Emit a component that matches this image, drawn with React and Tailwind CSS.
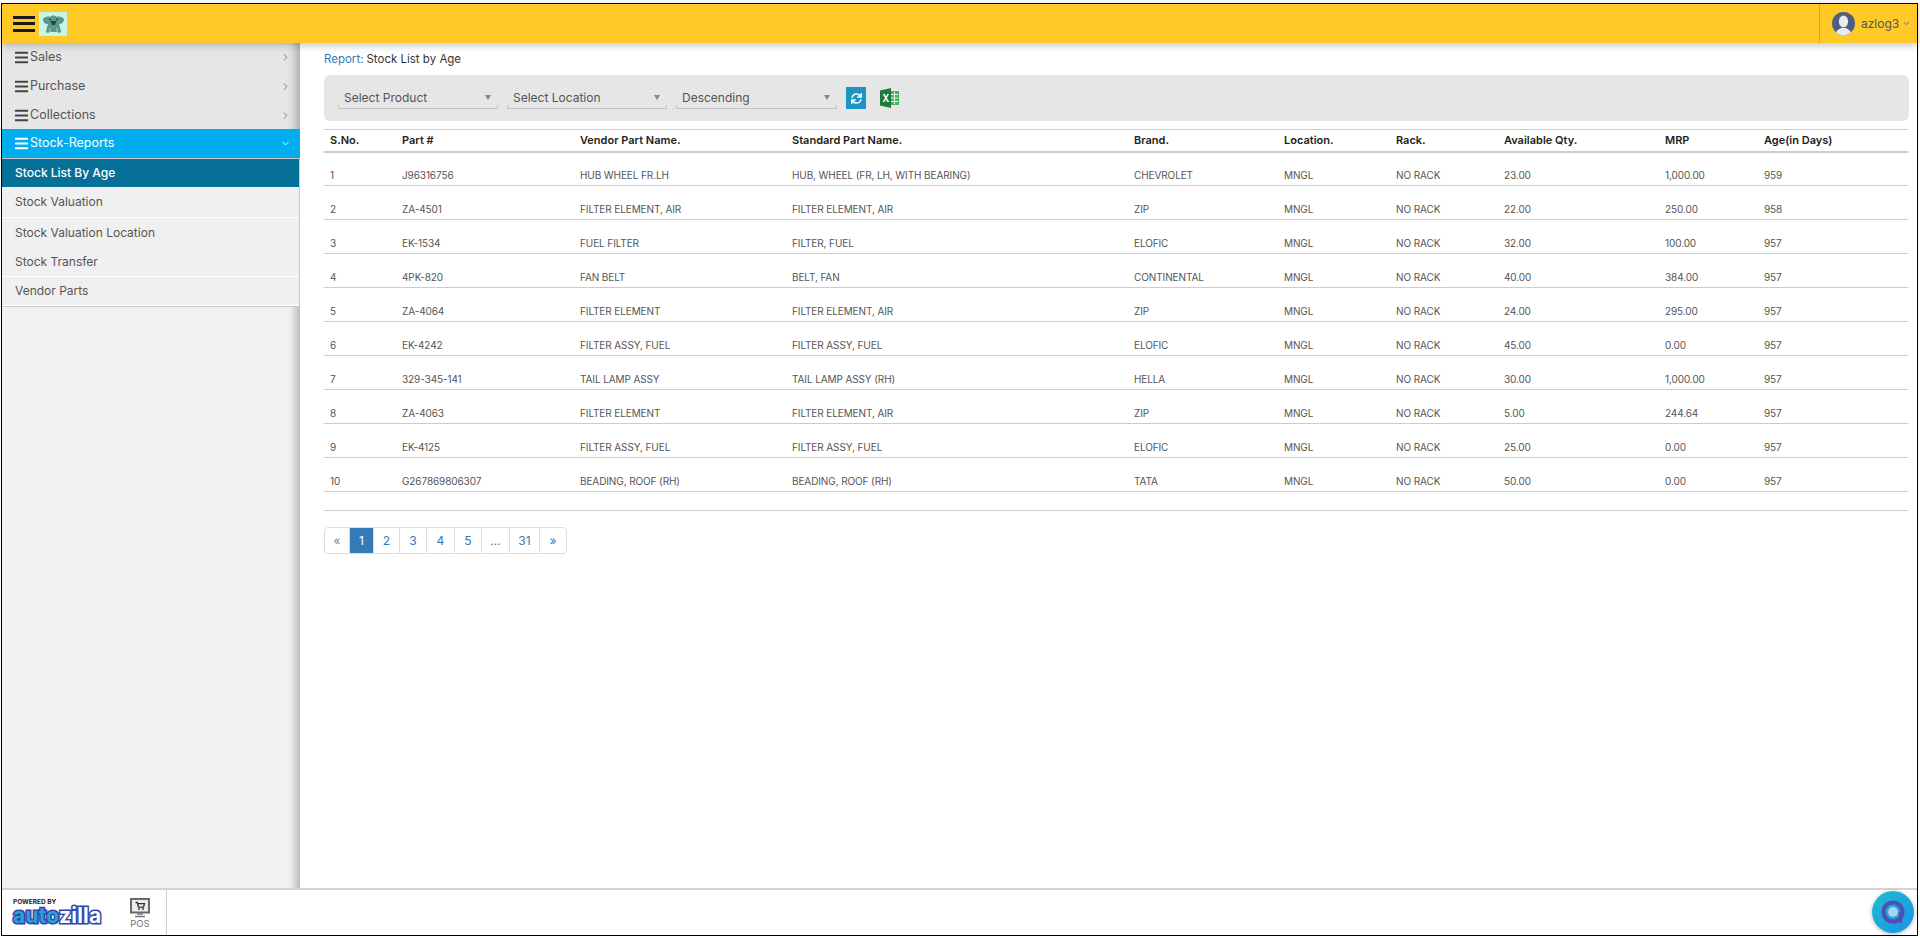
import React from "react";
import { FaBars, FaSync } from "react-icons/fa";
import { LuChevronRight, LuChevronDown } from "react-icons/lu";

const rows = [
  ["1","J96316756","HUB WHEEL FR.LH","HUB, WHEEL (FR, LH, WITH BEARING)","CHEVROLET","23.00","1,000.00","959"],
  ["2","ZA-4501","FILTER ELEMENT, AIR","FILTER ELEMENT, AIR","ZIP","22.00","250.00","958"],
  ["3","EK-1534","FUEL FILTER","FILTER, FUEL","ELOFIC","32.00","100.00","957"],
  ["4","4PK-820","FAN BELT","BELT, FAN","CONTINENTAL","40.00","384.00","957"],
  ["5","ZA-4064","FILTER ELEMENT","FILTER ELEMENT, AIR","ZIP","24.00","295.00","957"],
  ["6","EK-4242","FILTER ASSY, FUEL","FILTER ASSY, FUEL","ELOFIC","45.00","0.00","957"],
  ["7","329-345-141","TAIL LAMP ASSY","TAIL LAMP ASSY (RH)","HELLA","30.00","1,000.00","957"],
  ["8","ZA-4063","FILTER ELEMENT","FILTER ELEMENT, AIR","ZIP","5.00","244.64","957"],
  ["9","EK-4125","FILTER ASSY, FUEL","FILTER ASSY, FUEL","ELOFIC","25.00","0.00","957"],
  ["10","G267869806307","BEADING, ROOF (RH)","BEADING, ROOF (RH)","TATA","50.00","0.00","957"],
];
const heads = ["S.No.","Part #","Vendor Part Name.","Standard Part Name.","Brand.","Location.","Rack.","Available Qty.","MRP","Age(in Days)"];
const widths = ["w-[72px]","w-[178px]","w-[212px]","w-[342px]","w-[150px]","w-[112px]","w-[108px]","w-[161px]","w-[99px]","w-[150px]"];

function MenuItem({ label, h }) {
  return (
    <div className={`flex items-center pl-[12px] pr-[9px] text-[#555] ${h}`}>
      <FaBars className="w-[15px] h-[15px] text-[#444] mr-[1px]" />
      <span className="text-[12.5px]">{label}</span>
      <LuChevronRight className="ml-auto w-[11px] h-[11px] text-[#777]" />
    </div>
  );
}

function Select({ label, w }) {
  return (
    <div className={`relative h-[22px] ${w} border-b border-[#c4c4c4] flex items-center pl-[6px] text-[12px] text-[#555]`}>
      <span className="absolute left-0 bottom-0 w-px h-[3px] bg-[#c4c4c4]" />
      <span className="absolute right-0 bottom-0 w-px h-[3px] bg-[#c4c4c4]" />
      {label}
      <span className="absolute right-[7px] top-[8px] w-0 h-0 border-x-[3.5px] border-x-transparent border-t-[5px] border-t-[#888]" />
    </div>
  );
}

function ExcelIcon() {
  return (
    <svg width="19" height="20" viewBox="0 0 19 20">
      <rect x="10" y="3" width="9" height="14" fill="#4caf63" />
      <path d="M11 6.5h7M11 10h7M11 13.5h7M14.5 4v12" stroke="#e6f5ea" strokeWidth="1" />
      <path d="M0 2.5 11 0v20L0 17.5z" fill="#1f7a3d" />
      <path d="M2.8 6 5 10l-2.4 4h1.8L5.9 11.3 7.4 14h1.9L6.8 10 9 6H7.3L5.9 8.6 4.6 6z" fill="#fff" />
    </svg>
  );
}

function PosIcon() {
  return (
    <svg width="20" height="20" viewBox="0 0 20 20">
      <rect x="1" y="1" width="18" height="13.5" fill="#ececec" stroke="#6a6a6a" strokeWidth="2" />
      <path d="M5.5 4.5h1.8l1.2 4.6h5l1-3.4H7.6" fill="none" stroke="#333" strokeWidth="1.3" />
      <circle cx="9" cy="11" r="0.9" fill="#333" />
      <circle cx="13" cy="11" r="0.9" fill="#333" />
      <path d="M7 16h6M5 18.5h10" stroke="#777" strokeWidth="1.5" />
    </svg>
  );
}

export default function App() {
  return (
    <div className="w-full h-[938px] bg-white pt-[3px] pb-[2px] pl-px pr-[2px] overflow-hidden relative [font-family:Inter,sans-serif]">
      <div className="h-full border border-black flex flex-col relative">
        <header className="h-[39px] shrink-0 bg-[#ffca28] flex items-center relative z-20 shadow-[0_2px_8px_rgba(0,0,0,0.25)]">
          <div className="ml-[11px] w-[22px] flex flex-col gap-[3.5px]">
            <span className="h-[3px] bg-[#1a1a1a]" />
            <span className="h-[3px] bg-[#1a1a1a]" />
            <span className="h-[3px] bg-[#1a1a1a]" />
          </div>
          <div className="ml-[4px] w-[28px] h-[24px] bg-[#c8f5e6] flex items-center justify-center">
            <svg width="23" height="20" viewBox="0 0 23 20">
              <path d="M1 5c1-2 5-3 7-2 2-2 5-2 7 0 2-1 6 0 7 2 0 3-2 5-5 5l1 3 1 5c0 1-3 1-4 0h-7c-1 1-4 1-4 0l1-5 1-3C3 10 1 8 1 5z" fill="#5a9a88" />
              <path d="M8.5 7c1 2 1 4 2 4h2c1 0 1-2 2-4" fill="#27473f" />
              <circle cx="8" cy="5.5" r="0.9" fill="#23433a" />
              <circle cx="15" cy="5.5" r="0.9" fill="#23433a" />
              <path d="M8 14v4M15 14v4" stroke="#9fd0c0" strokeWidth="1" />
            </svg>
          </div>
          <div className="ml-auto h-full w-[98px] border-l border-[#d9a61c] flex items-center pl-[12px]">
            <svg width="23" height="23" viewBox="0 0 23 23" className="shrink-0">
              <defs>
                <clipPath id="av"><circle cx="11.5" cy="11.5" r="11.5" /></clipPath>
              </defs>
              <g clipPath="url(#av)">
                <rect width="23" height="23" fill="#515c85" />
                <ellipse cx="11.5" cy="9.5" rx="4.6" ry="6" fill="#e6ebec" />
                <path d="M3 23c1-5 5-6 6-7h5c1 1 5 2 6 7z" fill="#e6ebec" />
              </g>
            </svg>
            <span className="ml-[6px] text-[12px] text-[#555]">azlog3</span>
            <LuChevronDown className="ml-[3px] w-[9px] h-[9px] text-[#555]" />
          </div>
        </header>

        <div className="flex-1 flex min-h-0">
          <aside className="w-[298px] shrink-0 bg-[#f2f2f2] shadow-[inset_-12px_0_10px_-8px_rgba(0,0,0,0.28)] flex flex-col">
            <div className="bg-[#e6e6e6] shadow-[inset_-12px_0_10px_-8px_rgba(0,0,0,0.28)]">
              <MenuItem label="Sales" h="h-[29px]" />
              <MenuItem label="Purchase" h="h-[29px]" />
              <MenuItem label="Collections" h="h-[28px]" />
            </div>
            <div className="h-[29px] bg-[#00aeef] flex items-center pl-[12px] pr-[9px] text-white">
              <FaBars className="w-[15px] h-[15px] mr-[1px]" />
              <span className="text-[12.5px]">Stock-Reports</span>
              <LuChevronDown className="ml-auto w-[11px] h-[11px]" />
            </div>
            <div className="bg-[#f0f0f0] border-t border-[#c8c8c8] border-r border-r-[#c8c8c8] border-b text-[12px] text-[#555]">
              <div className="h-[28px] bg-[#067099] text-white flex items-center pl-[13px] font-medium">Stock List By Age</div>
              <div className="h-[31px] border-b border-white flex items-center pl-[13px]">Stock Valuation</div>
              <div className="h-[29px] flex items-center pl-[13px]">Stock Valuation Location</div>
              <div className="h-[30px] border-b border-white flex items-center pl-[13px]">Stock Transfer</div>
              <div className="h-[29px] border-b border-white flex items-center pl-[13px]">Vendor Parts</div>
            </div>
          </aside>

          <main className="flex-1 min-w-0 pl-[24px] pr-[8px] pt-[6px]">
            <div className="h-[21px] flex items-center text-[11.5px] text-[#333]">
              <span className="text-[#337ab7]">Report:</span>
              <span className="ml-[3px]">Stock List by Age</span>
            </div>
            <div className="mt-[5px] h-[46px] bg-[#e6e6e6] rounded-[6px] flex items-center pl-[14px] pr-[14px] gap-[9px]">
              <Select label="Select Product" w="w-[160px]" />
              <Select label="Select Location" w="w-[160px]" />
              <Select label="Descending" w="w-[161px]" />
              <button className="w-[20px] h-[22px] bg-[#1c94c4] flex items-center justify-center">
                <FaSync className="w-[11px] h-[11px] text-white" />
              </button>
              <span className="ml-[5px]"><ExcelIcon /></span>
            </div>
            <table className="mt-[8px] w-[1584px] table-fixed border-collapse">
              <colgroup>
                {widths.map((w, i) => <col key={i} className={w} />)}
              </colgroup>
              <thead>
                <tr className="h-[22px] border-t border-[#ccc] border-b-2 border-b-[#ccc]">
                  {heads.map((h, i) => (
                    <th key={i} className="pl-[6px] text-left text-[11px] font-semibold text-[#222]">{h}</th>
                  ))}
                </tr>
              </thead>
              <tbody>
                {rows.map((r) => (
                  <tr key={r[0]} className="h-[34px] border-b border-[#ccc] text-[10px] tracking-[-0.1px] text-[#555]">
                    {[r[0], r[1], r[2], r[3], r[4], "MNGL", "NO RACK", r[5], r[6], r[7]].map((c, i) => (
                      <td key={i} className="pl-[6px] pb-[2px] pt-0 align-bottom whitespace-nowrap">{c}</td>
                    ))}
                  </tr>
                ))}
              </tbody>
            </table>
            <div className="h-[19px] border-b border-[#ccc] w-[1584px]" />
            <div className="mt-[16px] inline-flex h-[27px] border border-[#ddd] rounded-[4px] text-[12px] text-[#337ab7] overflow-hidden">
              {[["«","w-[25px] text-[#888]"],["1","w-[24px] bg-[#337ab7] text-white"],["2","w-[26px]"],["3","w-[27px]"],["4","w-[28px]"],["5","w-[27px]"],["...","w-[28px]"],["31","w-[30px]"],["»","w-[26px]"]].map(([t, c], i) => (
                <span key={i} className={`flex items-center justify-center border-r border-[#ddd] last:border-r-0 ${c}`}>{t}</span>
              ))}
            </div>
          </main>
        </div>

        <footer className="h-[47px] shrink-0 border-t-2 border-[#d4d4d4] bg-white flex relative z-20">
          <div className="w-[165px] h-full border-r border-[#ccc] flex items-start relative">
            <div className="ml-[11px] mt-[9px]">
              <div className="text-[6.5px] leading-[6px] font-bold text-[#222]">POWERED BY</div>
              <div className="mt-[1px] text-[21px] leading-[20px] font-bold tracking-[0.2px] [-webkit-text-stroke:3px_#3344a8] [paint-order:stroke_fill]">
                <span className="text-[#2a9fd8]">auto</span><span className="text-white">zilla</span>
              </div>
            </div>
            <div className="absolute left-[128px] top-[8px] flex flex-col items-center">
              <PosIcon />
              <span className="text-[9.5px] leading-[12px] text-[#777]">POS</span>
            </div>
          </div>
        </footer>

        <div className="absolute right-[3px] bottom-[2px] z-30 w-[42px] h-[42px] rounded-full bg-gradient-to-br from-[#22bcd0] to-[#2090e8] shadow-[0_1px_4px_rgba(0,0,0,0.3)] flex items-center justify-center">
          <svg width="24" height="24" viewBox="0 0 24 24">
            <circle cx="12" cy="12" r="9.5" fill="none" stroke="#4f4fb0" strokeWidth="4" />
            <circle cx="12" cy="12" r="5" fill="#a8d4f2" />
            <path d="M19.5 12v9h-5" fill="none" stroke="#4f4fb0" strokeWidth="3.5" />
          </svg>
        </div>
      </div>
    </div>
  );
}
